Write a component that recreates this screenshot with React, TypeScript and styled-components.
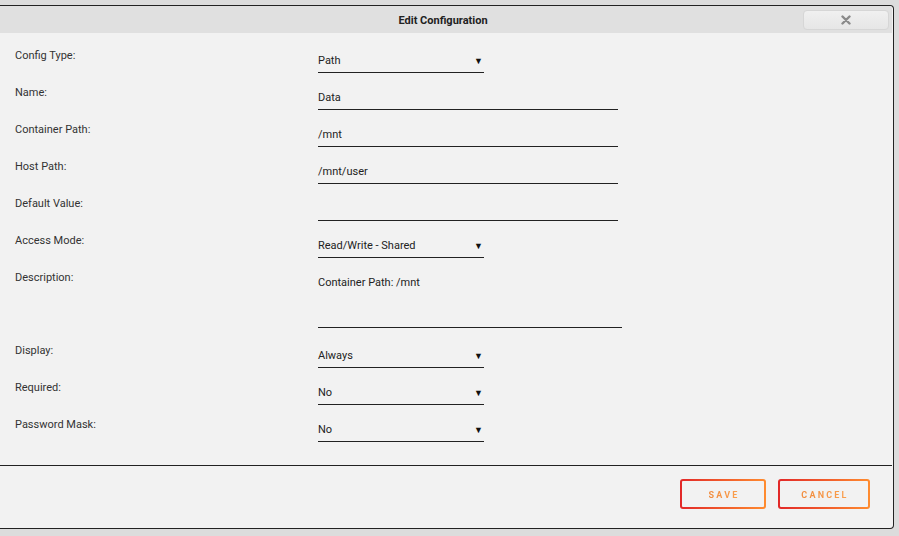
import React from "react";
import styled, { createGlobalStyle } from "styled-components";

const Global = createGlobalStyle`
  html, body { margin: 0; padding: 0; background: #dcdcdc; }
  body { font-family: Roboto, "Liberation Sans", sans-serif; color: #333; }
  * { box-sizing: border-box; }
`;

const Page = styled.div`
  width: 899px;
  height: 536px;
  background: #dcdcdc;
  padding-top: 5px;
  overflow: hidden;
`;

const Dialog = styled.div`
  width: 894px;
  height: 524px;
  background: #f2f2f2;
  border: 1px solid #222;
  border-left: none;
  border-radius: 0 4px 4px 0;
  display: flex;
  flex-direction: column;
`;

const TitleBar = styled.div`
  height: 27px;
  background: #e0e0e0;
  display: flex;
  align-items: center;
  justify-content: center;
  position: relative;
  margin-right: 1px;
  padding-top: 1px;
  border-radius: 0 3px 0 0;
`;

const Title = styled.div`
  font-size: 11px;
  font-weight: 700;
  color: #222;
  margin-left: -6px;
`;

const CloseButton = styled.button`
  position: absolute;
  right: 3px;
  top: 4px;
  width: 86px;
  height: 20px;
  border: 1px solid #d6d6d6;
  border-radius: 4px;
  background: linear-gradient(#f0f0f0, #e6e6e6);
  display: flex;
  align-items: center;
  justify-content: center;
  padding: 0;
`;

const Form = styled.div`
  flex: 1;
  padding: 16px 0 0 15px;
  display: flex;
  flex-direction: column;
`;

const Row = styled.div<{ $h: number }>`
  height: ${(p) => p.$h}px;
  display: grid;
  grid-template-columns: 303px 1fr;
  align-items: start;
`;

const Label = styled.div`
  font-size: 11px;
  line-height: 14px;
  color: #333;
`;

const Field = styled.div<{ $w: number; $h?: number }>`
  width: ${(p) => p.$w}px;
  height: ${(p) => p.$h ?? 22}px;
  margin-top: 2px;
  border-bottom: 1px solid #222;
  padding-top: 3px;
  font-size: 11px;
  line-height: 14px;
  color: #222;
  display: flex;
  justify-content: space-between;
  align-items: flex-start;
`;

const Arrow = styled.span`
  font-size: 9px;
  line-height: 14px;
  color: #111;
  margin-right: 1px;
`;

const Footer = styled.div`
  height: 63px;
  border-top: 1px solid #222;
  margin-right: 1px;
  display: flex;
  justify-content: flex-end;
  align-items: flex-start;
  gap: 12px;
  padding: 13px 22px 0 0;
`;

const ActionButton = styled.button<{ $w: number }>`
  width: ${(p) => p.$w}px;
  height: 30px;
  border: 2px solid transparent;
  border-radius: 3px;
  background: linear-gradient(#f2f2f2, #f2f2f2) padding-box,
    linear-gradient(90deg, #e22828, #ff8c2f) border-box;
  display: flex;
  align-items: center;
  justify-content: center;
  padding: 2px 0 0 2px;
  cursor: pointer;
`;

const ButtonText = styled.span`
  font-family: Roboto, "Liberation Sans", sans-serif;
  font-size: 9px;
  font-weight: 700;
  letter-spacing: 2.2px;
  background: linear-gradient(90deg, #f08a3c, #fba04e);
  -webkit-background-clip: text;
  background-clip: text;
  color: transparent;
`;

type Item = { label: string; value?: string; kind: "select" | "input" | "textarea"; h?: number };

const items: Item[] = [
  { label: "Config Type:", value: "Path", kind: "select" },
  { label: "Name:", value: "Data", kind: "input" },
  { label: "Container Path:", value: "/mnt", kind: "input" },
  { label: "Host Path:", value: "/mnt/user", kind: "input" },
  { label: "Default Value:", value: "", kind: "input" },
  { label: "Access Mode:", value: "Read/Write - Shared", kind: "select" },
  { label: "Description:", value: "Container Path: /mnt", kind: "textarea", h: 73 },
  { label: "Display:", value: "Always", kind: "select" },
  { label: "Required:", value: "No", kind: "select" },
  { label: "Password Mask:", value: "No", kind: "select" },
];

export default function App() {
  return (
    <>
      <Global />
      <Page>
        <Dialog>
          <TitleBar>
            <Title>Edit Configuration</Title>
            <CloseButton aria-label="close">
              <svg width="10" height="10" viewBox="0 0 10 10">
                <path d="M1.5 1.5 L8.5 8.5 M8.5 1.5 L1.5 8.5" stroke="#8a8a8a" strokeWidth="2.4" strokeLinecap="round" />
              </svg>
            </CloseButton>
          </TitleBar>
          <Form>
            {items.map((it) => (
              <Row key={it.label} $h={it.h ?? 37}>
                <Label>{it.label}</Label>
                {it.kind === "select" ? (
                  <Field $w={166}>
                    <span>{it.value}</span>
                    <Arrow>▼</Arrow>
                  </Field>
                ) : it.kind === "textarea" ? (
                  <Field $w={304} $h={55}>
                    <span>{it.value}</span>
                  </Field>
                ) : (
                  <Field $w={300}>
                    <span>{it.value}</span>
                  </Field>
                )}
              </Row>
            ))}
          </Form>
          <Footer>
            <ActionButton $w={86}>
              <ButtonText>SAVE</ButtonText>
            </ActionButton>
            <ActionButton $w={92}>
              <ButtonText>CANCEL</ButtonText>
            </ActionButton>
          </Footer>
        </Dialog>
      </Page>
    </>
  );
}
